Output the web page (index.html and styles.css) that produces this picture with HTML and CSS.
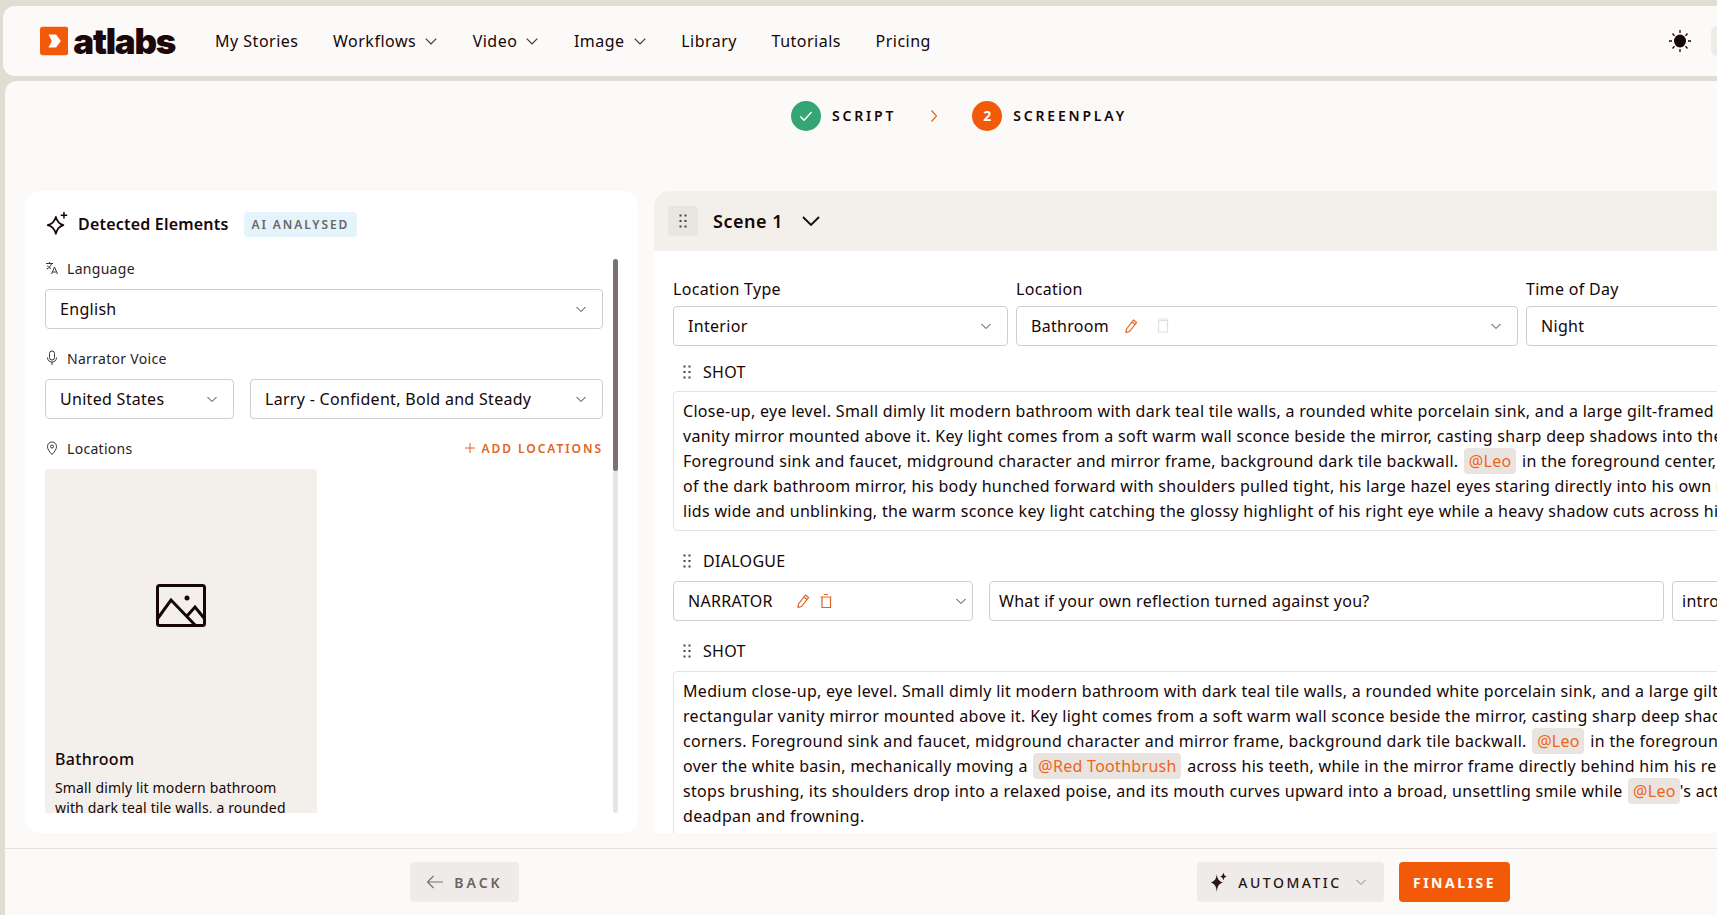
FILE: index.html
```html
<!DOCTYPE html>
<html lang="en">

<head>
    <meta charset="UTF-8">
    <meta name="viewport" content="width=device-width, initial-scale=1.0">
    <title>Atlabs - Screenplay</title>
    <link rel="stylesheet" href="styles.css">
</head>

<body>
    <header class="topbar">
        <div class="logo">
            <svg class="logo-mark" width="30" height="30" viewBox="0 0 30 30">
                <rect width="30" height="30" rx="3" fill="#f25a0a" />
                <path d="M9 8h8l5 7-5 7H9l3.500-7z" fill="#fff" />
            </svg>
            <span class="logo-text">atlabs</span>
        </div>
        <nav class="nav">
            <a>My Stories</a>
            <a>Workflows <svg class="chev" width="14" height="14" viewBox="0 0 12 12"><path d="M1.500 4l4.500 4.500L10.500 4" /></svg></a>
            <a>Video <svg class="chev" width="14" height="14" viewBox="0 0 12 12"><path d="M1.500 4l4.500 4.500L10.500 4" /></svg></a>
            <a>Image <svg class="chev" width="14" height="14" viewBox="0 0 12 12"><path d="M1.500 4l4.500 4.500L10.500 4" /></svg></a>
            <a>Library</a>
            <a>Tutorials</a>
            <a>Pricing</a>
        </nav>
        <svg class="sun" width="24" height="24" viewBox="0 0 24 24">
            <ellipse cx="12" cy="12" rx="6" ry="6.500" fill="#160606" />
            <path d="M12 1v3M12 20v3M1 12h3M20 12h3M4.500 4.500l2 2.400M17.500 17.100l2 2.400M19.500 4.500l-2 2.400M6.500 17.100l-2 2.400" stroke="#160606" stroke-width="1.300" fill="none" />
        </svg>
        <div class="avatar-edge"></div>
    </header>

    <main class="shell">
        <div class="stepper">
            <div class="step">
                <span class="step-dot done">
                    <svg width="18" height="18" viewBox="0 0 16 16"><path d="M3 8.500l3.300 3.300L13 4.500" fill="none" stroke="#fff" stroke-width="1.300" /></svg>
                </span>
                <span class="step-name">SCRIPT</span>
            </div>
            <svg class="step-arrow" width="10" height="14" viewBox="0 0 10 14"><path d="M2.500 1.500L7.500 7l-5 5.500" /></svg>
            <div class="step">
                <span class="step-dot current">2</span>
                <span class="step-name">SCREENPLAY</span>
            </div>
        </div>

        <div class="workspace">
            <aside class="elements">
                <div class="elements-head">
                    <svg width="26" height="26" viewBox="0 0 24 24" fill="none" stroke="#160606" stroke-width="1.600">
                        <path d="M10 5.500c1 4 3 6.300 7 7.500-4 1.200-6 3.500-7 8-1-4.500-3-6.800-7.500-8 4.500-1.200 6.500-3.500 7.500-7.500z" stroke-linejoin="round" />
                        <path d="M17.500 1v6M14.500 4h6" stroke-width="1.400" />
                    </svg>
                    <h2>Detected Elements</h2>
                    <span class="badge">AI ANALYSED</span>
                </div>
                <div class="elements-scroll">
                    <div class="elements-form">
                        <div class="field-label">
                            <svg width="14" height="14" viewBox="0 0 14 14" fill="none" stroke="#3d3535" stroke-width="1"><path d="M1 2.500h7M4.500 1v1.500M6.500 2.500c-.6 2.500-2.500 4.500-5 5.500M2.500 4.500c.8 1.500 2 2.500 3.500 3M6.500 13l3-7 3 7M7.500 11h4" /></svg>
                            Language
                        </div>
                        <div class="select">
                            <span>English</span>
                            <svg class="chev" width="12" height="12" viewBox="0 0 12 12"><path d="M1.500 4l4.500 4.500L10.500 4" /></svg>
                        </div>
                        <div class="field-label voice-label">
                            <svg width="14" height="16" viewBox="0 0 14 16" fill="none" stroke="#3d3535" stroke-width="1"><rect x="4.500" y="1" width="5" height="9" rx="2.500" /><path d="M2.500 7.500c0 3 2 4.500 4.500 4.500s4.500-1.500 4.500-4.500M7 12v3" /></svg>
                            Narrator Voice
                        </div>
                        <div class="select-row">
                            <div class="select country">
                                <span>United States</span>
                                <svg class="chev" width="12" height="12" viewBox="0 0 12 12"><path d="M1.500 4l4.500 4.500L10.500 4" /></svg>
                            </div>
                            <div class="select voice">
                                <span>Larry - Confident, Bold and Steady</span>
                                <svg class="chev" width="12" height="12" viewBox="0 0 12 12"><path d="M1.500 4l4.500 4.500L10.500 4" /></svg>
                            </div>
                        </div>
                        <div class="locations-head">
                            <div class="field-label">
                                <svg width="14" height="16" viewBox="0 0 14 16" fill="none" stroke="#3d3535" stroke-width="1"><path d="M7 14.500c-3-3.200-4.500-5.500-4.500-8a4.500 4.500 0 0 1 9 0c0 2.500-1.500 4.800-4.500 8z" /><circle cx="7" cy="6.500" r="1.500" /></svg>
                                Locations
                            </div>
                            <span class="add-link">
                                <svg width="12" height="12" viewBox="0 0 12 12" fill="none" stroke="#e0641e" stroke-width="1"><path d="M6 1v10M1 6h10" /></svg>
                                ADD LOCATIONS
                            </span>
                        </div>
                        <div class="location-card">
                            <div class="location-picture">
                                <svg width="50" height="43" viewBox="0 0 50 43" fill="none" stroke="#160606" stroke-width="3">
                                    <rect x="1.500" y="1.500" width="47" height="40" rx="2" />
                                    <path d="M2 34L15 16l24 25M31 32l8-9 9 11" />
                                    <circle cx="31" cy="14" r="2.500" fill="#160606" stroke="none" />
                                </svg>
                            </div>
                            <h3>Bathroom</h3>
                            <p>Small dimly lit modern bathroom with dark teal tile walls, a rounded white porcelain sink</p>
                        </div>
                    </div>
                    <div class="scrollbar"><div class="scrollbar-thumb"></div></div>
                </div>
            </aside>

            <section class="scene">
                <div class="scene-head">
                    <span class="grip-btn">
                        <svg class="grip" width="8" height="14" viewBox="0 0 8 14"><use href="#grip-dots" /></svg>
                    </span>
                    <h2>Scene 1</h2>
                    <svg class="scene-chev" width="20" height="12" viewBox="0 0 20 12"><path d="M2 2l8 8 8-8" /></svg>
                </div>
                <div class="scene-body">
                    <div class="scene-fields">
                        <div class="field type-field">
                            <label>Location Type</label>
                            <div class="select">
                                <span>Interior</span>
                                <svg class="chev" width="12" height="12" viewBox="0 0 12 12"><path d="M1.500 4l4.500 4.500L10.500 4" /></svg>
                            </div>
                        </div>
                        <div class="field place-field">
                            <label>Location</label>
                            <div class="select">
                                <span class="select-main">Bathroom
                                    <svg class="pencil" width="16" height="16" viewBox="0 0 16 16"><path d="M10.500 2l3 2.500-7 9-3.500 1 .5-3.500zM9 4l3 2.500" /></svg>
                                    <svg class="bin faded" width="14" height="16" viewBox="0 0 14 16"><path d="M2.500 3.500h9V15h-9zM2.500 2h9" /></svg>
                                </span>
                                <svg class="chev" width="12" height="12" viewBox="0 0 12 12"><path d="M1.500 4l4.500 4.500L10.500 4" /></svg>
                            </div>
                        </div>
                        <div class="field time-field">
                            <label>Time of Day</label>
                            <div class="select">
                                <span>Night</span>
                            </div>
                        </div>
                    </div>

                    <div class="block-label">
                        <svg class="grip" width="8" height="14" viewBox="0 0 8 14"><use href="#grip-dots" /></svg>
                        SHOT
                    </div>
                    <div class="prompt">
                        <div>Close-up, eye level. Small dimly lit modern bathroom with dark teal tile walls, a rounded white porcelain sink, and a large gilt-framed</div>
                        <div>vanity mirror mounted above it. Key light comes from a soft warm wall sconce beside the mirror, casting sharp deep shadows into the</div>
                        <div>Foreground sink and faucet, midground character and mirror frame, background dark tile backwall. <span class="tag">@Leo</span> in the foreground center,</div>
                        <div>of the dark bathroom mirror, his body hunched forward with shoulders pulled tight, his large hazel eyes staring directly into his own reflection</div>
                        <div>lids wide and unblinking, the warm sconce key light catching the glossy highlight of his right eye while a heavy shadow cuts across his face</div>
                    </div>

                    <div class="block-label dialogue-label">
                        <svg class="grip" width="8" height="14" viewBox="0 0 8 14"><use href="#grip-dots" /></svg>
                        DIALOGUE
                    </div>
                    <div class="dialogue-row">
                        <div class="select speaker">
                            <span class="select-main">NARRATOR
                                <svg class="pencil" width="16" height="16" viewBox="0 0 16 16"><path d="M10.500 2l3 2.500-7 9-3.500 1 .5-3.500zM9 4l3 2.500" /></svg>
                                <svg class="bin" width="14" height="16" viewBox="0 0 14 16"><path d="M3 4h8.500v10.500H3zM1.500 4h11M5 1.500h4" /></svg>
                            </span>
                            <svg class="chev" width="12" height="12" viewBox="0 0 12 12"><path d="M1.500 4l4.500 4.500L10.500 4" /></svg>
                        </div>
                        <div class="line-input">What if your own reflection turned against you?</div>
                        <div class="line-input tone">introspective</div>
                    </div>

                    <div class="block-label dialogue-label">
                        <svg class="grip" width="8" height="14" viewBox="0 0 8 14"><use href="#grip-dots" /></svg>
                        SHOT
                    </div>
                    <div class="prompt">
                        <div>Medium close-up, eye level. Small dimly lit modern bathroom with dark teal tile walls, a rounded white porcelain sink, and a large gilt-framed</div>
                        <div>rectangular vanity mirror mounted above it. Key light comes from a soft warm wall sconce beside the mirror, casting sharp deep shadows</div>
                        <div>corners. Foreground sink and faucet, midground character and mirror frame, background dark tile backwall. <span class="tag">@Leo</span> in the foreground center,</div>
                        <div>over the white basin, mechanically moving a <span class="tag">@Red Toothbrush</span> across his teeth, while in the mirror frame directly behind him his reflection</div>
                        <div>stops brushing, its shoulders drop into a relaxed poise, and its mouth curves upward into a broad, unsettling smile while <span class="tag tag-tight">@Leo</span>'s actual face stays</div>
                        <div>deadpan and frowning.</div>
                    </div>
                </div>
            </section>
        </div>

        <footer class="actions">
            <button class="btn back-btn">
                <svg width="18" height="14" viewBox="0 0 18 14" fill="none" stroke="#7a7070" stroke-width="1.200"><path d="M7.500 1L1.500 7l6 6M1.500 7H17" /></svg>
                BACK
            </button>
            <button class="btn auto-btn">
                <svg width="22" height="22" viewBox="0 0 20 20" fill="#2a1414"><path d="M8 3c.6 4.500 1.800 6.200 5.500 7.500C9.800 11.800 8.600 13.500 8 19c-.6-5.500-1.800-7.200-5.500-8.500C6.200 9.200 7.400 7.500 8 3z" /><path d="M14 1.500l1 2.500 2 1-2 1-1 2.500-1-2.500-2-1 2-1z" /></svg>
                AUTOMATIC
                <svg class="chev pale" width="12" height="12" viewBox="0 0 12 12"><path d="M1.500 4l4.500 4.500L10.500 4" /></svg>
            </button>
            <button class="btn finalise-btn">FINALISE</button>
        </footer>
    </main>

    <svg class="sprite" width="0" height="0">
        <defs>
            <g id="grip-dots" fill="#4a4040">
                <rect x="0.500" y="0.500" width="2" height="2" />
                <rect x="5.500" y="0.500" width="2" height="2" />
                <rect x="0.500" y="6" width="2" height="2" />
                <rect x="5.500" y="6" width="2" height="2" />
                <rect x="0.500" y="11.500" width="2" height="2" />
                <rect x="5.500" y="11.500" width="2" height="2" />
            </g>
        </defs>
    </svg>
</body>

</html>
```

FILE: styles.css
```css
* {
    box-sizing: border-box;
}

html,
body {
    height: 100%;
}

body {
    margin: 0;
    height: 915px;
    padding-top: 6px;
    overflow: hidden;
    display: flex;
    flex-direction: column;
    gap: 5px;
    background-color: #e2ddd3;
    color: #160606;
    font-family: "Noto Sans", sans-serif;
    font-size: 16px;
    letter-spacing: 0.3px;
}

.sprite {
    position: absolute;
}

.chev {
    flex: none;
    fill: none;
    stroke: #3d3535;
    stroke-width: 1;
}

.chev.pale {
    stroke: #8b8383;
}

/* top bar */
.topbar {
    height: 70px;
    flex: none;
    margin-left: 3px;
    padding-left: 37px;
    display: flex;
    align-items: center;
    background-color: #fbfaf8;
    border-radius: 12px 0 0 12px;
}

.logo {
    width: 135px;
    display: flex;
    align-items: center;
    gap: 5px;
}

.logo-text {
    font-family: "Inter", sans-serif;
    font-size: 35px;
    font-weight: 900;
    letter-spacing: -1.300px;
    line-height: 30px;
    color: #1c0808;
}

.nav {
    margin-left: 40px;
    display: flex;
    gap: 34.500px;
    letter-spacing: 0.500px;
}

.nav a {
    display: flex;
    align-items: center;
    gap: 8px;
}

.sun {
    margin-left: auto;
    margin-right: 19px;
}

.avatar-edge {
    width: 6px;
    height: 30px;
    background-color: #efece8;
    border-radius: 6px 0 0 6px;
}

/* main panel */
.shell {
    flex: 1;
    min-height: 0;
    margin-left: 5px;
    display: flex;
    flex-direction: column;
    background-color: #fbfaf8;
    border-radius: 12px 0 0 0;
    overflow: hidden;
}

/* the page runs wider than the window, so the steps sit right of its middle */
.stepper {
    width: 1908px;
    height: 69px;
    flex: none;
    display: flex;
    align-items: center;
    justify-content: center;
    gap: 33px;
}

.step {
    display: flex;
    align-items: center;
    gap: 11px;
}

.step-dot {
    width: 30px;
    height: 30px;
    display: flex;
    align-items: center;
    justify-content: center;
    border-radius: 50%;
    color: #fff;
    font-size: 14px;
    font-weight: 700;
}

.step-dot.done {
    background-color: #35a574;
}

.step-dot.current {
    background-color: #f25a0a;
}

.step-name {
    font-size: 14px;
    font-weight: 600;
    letter-spacing: 2.800px;
}

.step-arrow {
    fill: none;
    stroke: #e0641e;
    stroke-width: 1.200;
}

.workspace {
    flex: 1;
    min-height: 0;
    padding: 41px 0 15px 20px;
    display: flex;
    gap: 16px;
    border-bottom: 1px solid #e8dfdf;
}

/* left card */
.elements {
    width: 613px;
    flex: none;
    padding: 20px 20px 20px;
    display: flex;
    flex-direction: column;
    background-color: #fff;
    border-radius: 16px;
}

.elements-head {
    height: 26px;
    display: flex;
    align-items: center;
    gap: 7px;
    margin-bottom: 22px;
}

.elements-head h2 {
    margin: 0 8px 0 0;
    font-size: 16px;
    font-weight: 600;
    letter-spacing: 0.200px;
}

.badge {
    padding: 0 8px;
    height: 25px;
    display: flex;
    align-items: center;
    font-size: 12px;
    font-weight: 600;
    letter-spacing: 1.900px;
    color: #6b6565;
    background-color: #e4f4fa;
    border-radius: 4px;
}

.elements-scroll {
    flex: 1;
    min-height: 0;
    display: flex;
    gap: 10px;
    overflow: hidden;
}

.elements-form {
    width: 558px;
    flex: none;
    overflow: hidden;
}

.field-label {
    height: 20px;
    padding-bottom: 2px;
    display: flex;
    align-items: center;
    gap: 8px;
    font-size: 14px;
    color: #2a1c1c;
}

.select {
    height: 40px;
    margin-top: 10px;
    padding: 0 15px 0 14px;
    display: flex;
    align-items: center;
    justify-content: space-between;
    background-color: #fff;
    border: 1px solid #d3cdcd;
    border-radius: 4px;
    white-space: nowrap;
}

.voice-label,
.locations-head {
    margin-top: 20px;
}

.select-row {
    display: flex;
    gap: 16px;
}

.country {
    width: 189px;
}

.voice {
    flex: 1;
}

.locations-head {
    display: flex;
    align-items: center;
    justify-content: space-between;
}

.add-link {
    display: flex;
    align-items: center;
    gap: 5px;
    padding-bottom: 2px;
    font-size: 12px;
    font-weight: 600;
    letter-spacing: 1.950px;
    color: #e0641e;
}

.location-card {
    width: 272px;
    height: 360px;
    margin-top: 10px;
    padding: 0 10px;
    background-color: #f3f0ec;
    border-radius: 4px 4px 0 0;
}

.location-picture {
    height: 278px;
    padding-bottom: 5px;
    display: flex;
    align-items: center;
    justify-content: center;
}

.location-card h3 {
    margin: 0;
    font-size: 16px;
    font-weight: 500;
    line-height: 24px;
}

.location-card p {
    margin: 7px 0 0;
    font-size: 14px;
    line-height: 20px;
    letter-spacing: 0.150px;
}

.scrollbar {
    width: 5px;
    flex: none;
    background-color: #e8e4e0;
    border-radius: 3px;
}

.scrollbar-thumb {
    height: 212px;
    background-color: #7a7370;
    border-radius: 3px;
}

/* scene */
.scene {
    flex: 1;
    min-width: 0;
    display: flex;
    flex-direction: column;
    background-color: #fff;
    border-radius: 16px 0 0 0;
    overflow: hidden;
}

.scene-head {
    height: 60px;
    flex: none;
    padding-left: 14px;
    display: flex;
    align-items: center;
    background-color: #f3f0eb;
}

.grip-btn {
    width: 30px;
    height: 30px;
    display: flex;
    align-items: center;
    justify-content: center;
    background-color: #e9e5e1;
    border-radius: 4px;
}

.scene-head h2 {
    margin: 0 0 0 15px;
    font-size: 18px;
    font-weight: 600;
    letter-spacing: 0.500px;
}

.scene-chev {
    margin-left: 18px;
    fill: none;
    stroke: #160606;
    stroke-width: 1.800;
}

.scene-body {
    flex: 1;
    min-height: 0;
    padding: 26px 0 0 19px;
    overflow: hidden;
}

.scene-fields {
    display: flex;
    gap: 8px;
}

.field label {
    display: block;
    height: 24px;
    margin-bottom: 5px;
    line-height: 24px;
}

.field .select {
    margin-top: 0;
}

.type-field {
    width: 335px;
    flex: none;
}

.place-field {
    width: 502px;
    flex: none;
}

.time-field {
    width: 300px;
    flex: none;
}

.select-main {
    display: flex;
    align-items: center;
    gap: 8px;
}

.pencil {
    margin-left: 6px;
    fill: none;
    stroke: #e0641e;
    stroke-width: 1.200;
}

.bin {
    fill: none;
    stroke: #e0641e;
    stroke-width: 1.200;
}

.bin.faded {
    margin-left: 9px;
    margin-top: -3px;
    stroke: #e2e0dd;
}

.block-label {
    height: 24px;
    margin-top: 14px;
    padding-left: 10px;
    display: flex;
    align-items: center;
    gap: 12px;
}

.dialogue-label {
    margin-top: 18px;
}

.prompt {
    width: 1200px;
    margin-top: 7px;
    padding: 7px 9px 6px;
    border: 1px solid #e6e2de;
    border-radius: 4px;
    line-height: 25px;
    white-space: nowrap;
}

.dialogue-label + .prompt {
    margin-top: 8px;
}

.tag {
    padding: 2px 4px 2px 5px;
    margin: 0 2px 0 1px;
    color: #f0641a;
    background-color: #e9e4df;
    border-radius: 4px;
}

.tag-tight {
    margin-right: 0;
}

.dialogue-row {
    width: 1200px;
    margin-top: 8px;
    display: flex;
    gap: 8px;
}

.dialogue-row .select {
    margin-top: 0;
}

.speaker {
    width: 300px;
    flex: none;
    margin-right: 8px;
    padding-right: 5px;
}

.speaker .pencil {
    margin-left: 14px;
}

.line-input {
    width: 675px;
    height: 40px;
    flex: none;
    padding: 0 9px;
    display: flex;
    align-items: center;
    border: 1px solid #d3cdcd;
    border-radius: 4px;
    white-space: nowrap;
}

.tone {
    width: 200px;
}

/* footer */
.actions {
    height: 66px;
    flex: none;
    padding-left: 405px;
    display: flex;
    align-items: center;
}

.btn {
    height: 40px;
    padding: 0;
    display: flex;
    align-items: center;
    justify-content: center;
    border: none;
    border-radius: 4px;
    font-family: inherit;
    font-size: 14px;
    font-weight: 600;
    letter-spacing: 2.500px;
}

.back-btn {
    width: 109px;
    gap: 10px;
    letter-spacing: 3px;
    color: #6b6262;
    background-color: #eeebe9;
}

.auto-btn {
    width: 187px;
    margin-left: 678px;
    padding-right: 6px;
    gap: 8px;
    font-weight: 500;
    color: #2a1414;
    background-color: #eeebe9;
}

.auto-btn .chev {
    margin-left: 5px;
}

.finalise-btn {
    width: 111px;
    margin-left: 15px;
    font-weight: 700;
    color: #fff;
    background-color: #f25a0a;
}
```
